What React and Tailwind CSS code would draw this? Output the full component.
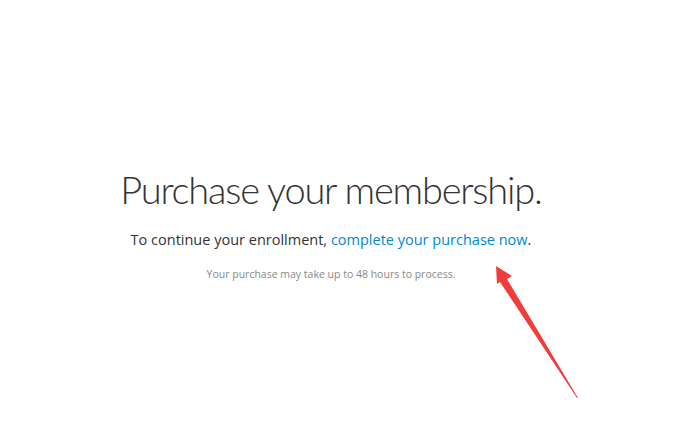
export default function App() {
  return (
    <div className="relative w-[699px] h-[440px] bg-white overflow-hidden" style={{ fontFamily: '"Open Sans", "Noto Sans", sans-serif' }}>
      <div className="w-[662px] flex flex-col items-center pt-[164px]">
        <h1 className="text-[38px] leading-[50px] font-light text-[#333333] tracking-[-1.2px]" style={{ fontFamily: 'Lato, "Open Sans", sans-serif' }}>Purchase your membership.</h1>
        <p className="mt-[16px] text-[14.5px] leading-[20px] text-[#333333]">
          To continue your enrollment, <span className="text-[#0088cc]">complete your purchase now</span>.
        </p>
        <p className="mt-[17px] text-[10.5px] leading-[14px] text-[#888888]">Your purchase may take up to 48 hours to process.</p>
      </div>
      <svg className="absolute left-0 top-0" width="699" height="440" viewBox="0 0 699 440">
        <polygon points="496,266 512,276 507,279 578,398 577,398 500,282 497,284" fill="#f23b3b" />
      </svg>
    </div>
  );
}
